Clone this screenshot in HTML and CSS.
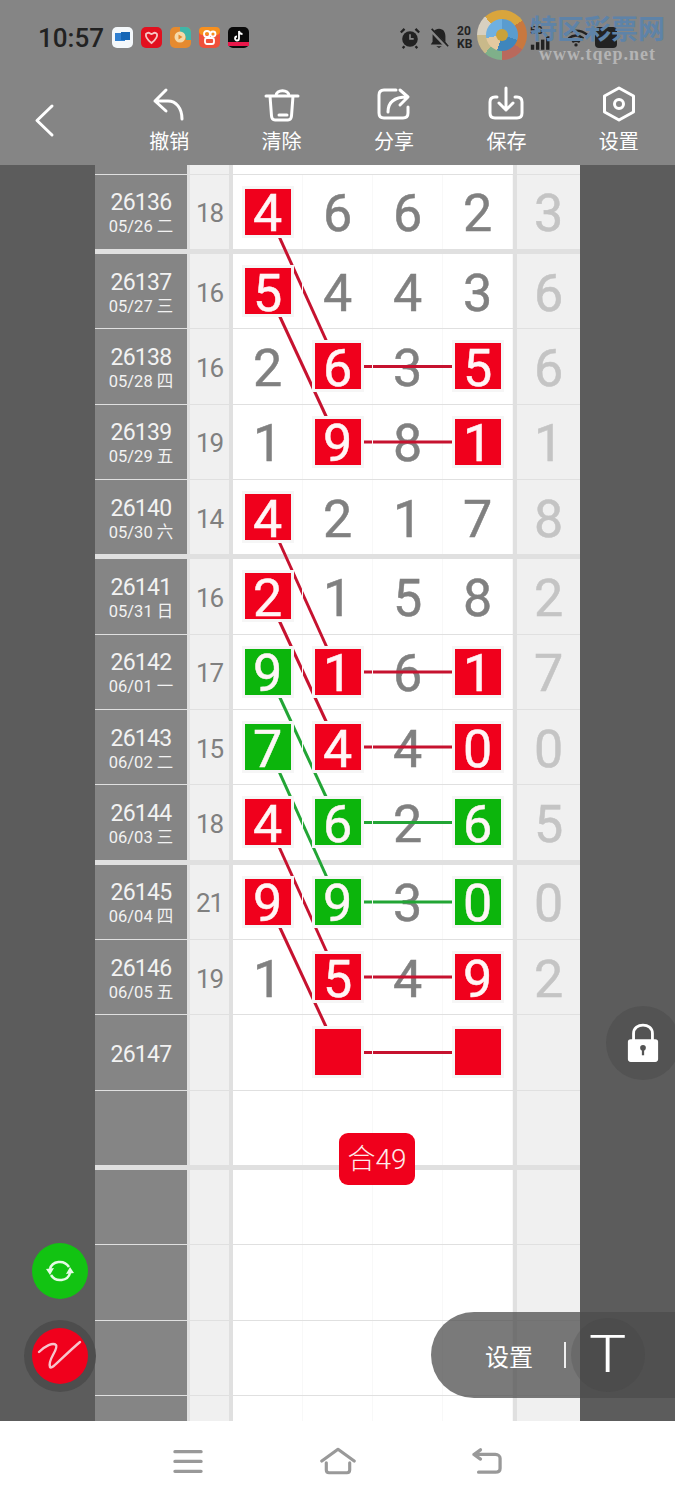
FILE: index.html
```html
<!DOCTYPE html>
<html lang="zh-CN">
<head>
  <meta charset="UTF-8" />
  <meta name="viewport" content="width=device-width, initial-scale=1.0"/>
  <title>排列五 走势图</title>
  <link rel="stylesheet" href="styles.css">
</head>
<body>

<div class="top">
  <div class="status">
    <span class="time">10:57</span>
    <div class="apps">
      <svg class="app" viewBox="0 0 21 21"><rect width="21" height="21" rx="5" fill="#f4f8fb"/><rect x="3" y="6" width="10" height="8" fill="#2f7fd0"/><rect x="9" y="5" width="9" height="8" fill="#1565b5"/></svg>
      <svg class="app" viewBox="0 0 21 21"><rect width="21" height="21" rx="5" fill="#e2101f"/><path d="M5 7c3-3 4 0 5.500 0s3-3 5.500 0c1 4-3 7-5.500 9C8 14 4 11 5 7z" fill="none" stroke="#f6c6c6" stroke-width="1.800"/></svg>
      <svg class="app" viewBox="0 0 21 21"><rect width="21" height="21" rx="5" fill="#e58a2e"/><path d="M10 0h6a5 5 0 0 1 5 5v8H16A8 8 0 0 0 10 5z" fill="#3fb6a8"/><circle cx="10" cy="10" r="5.500" fill="#f6d9a8"/><path d="M8.500 7.500l4 2.500-4 2.500z" fill="#e58a2e"/></svg>
      <svg class="app" viewBox="0 0 21 21"><rect width="21" height="21" rx="5" fill="#f0503a"/><rect width="21" height="8" rx="4" fill="#f7901e"/><circle cx="8" cy="7" r="3" fill="none" stroke="#fff" stroke-width="1.800"/><circle cx="14" cy="7" r="2.500" fill="none" stroke="#fff" stroke-width="1.800"/><rect x="6" y="11" width="9" height="6" rx="2" fill="none" stroke="#fff" stroke-width="1.800"/></svg>
      <svg class="app" viewBox="0 0 21 21"><rect width="21" height="21" rx="5" fill="#0a0a0a"/><rect y="15" width="21" height="4" fill="#e8174a"/><path d="M11 4v7.500a2 2 0 1 1-2-2M11 4c.3 2 1.500 3 3.500 3" fill="none" stroke="#fff" stroke-width="1.800"/></svg>
    </div>
    <div class="sys">
      <svg class="sys-icon" viewBox="0 0 24 24"><circle cx="12" cy="13" r="8.500" fill="#222"/><path d="M12 8v5h4" fill="none" stroke="#888" stroke-width="1.800"/><path d="M2 6l4-4M22 6l-4-4M6 21l-2 2M18 21l2 2" stroke="#222" stroke-width="2.500"/></svg>
      <svg class="sys-icon" viewBox="0 0 24 24"><path d="M12 2c-5 0-7 4-7 8v6l-2 3h18l-2-3v-6c0-4-2-8-7-8zM9 21h6l-3 2z" fill="#222"/><path d="M3 3l18 19" stroke="#888" stroke-width="4"/><path d="M4 2l18 19" stroke="#222" stroke-width="1.800"/></svg>
      <div class="speed"><span>20</span><span>KB</span></div>
      <div class="net">
        <span>5G</span>
        <svg viewBox="0 0 26 16"><rect x="1" y="10" width="4" height="6" fill="#222"/><rect x="7" y="7" width="4" height="9" fill="#222"/><rect x="13" y="4" width="4" height="12" fill="#222"/><rect x="19" y="0" width="4" height="16" fill="#222"/></svg>
      </div>
      <svg class="wifi" viewBox="0 0 28 20"><path d="M2 7c7-6 17-6 24 0M6 11c5-4 11-4 16 0M10 15c3-2 5-2 8 0" fill="none" stroke="#222" stroke-width="2.500"/><circle cx="14" cy="18" r="1.800" fill="#222"/></svg>
      <div class="battery"></div>
    </div>
    <div class="mark">
      <div class="mark-logo"><div class="mark-hole"><div class="mark-dot"></div></div></div>
      <div class="mark-text">
        <div class="mark-name">特区彩票网</div>
        <div class="mark-url">www.tqep.net</div>
      </div>
    </div>
  </div>

  <div class="toolbar">
    <svg class="back" viewBox="26 96 34 50"><path d="M52 106L37 120.500L52 135"/></svg>
    <div class="tool">
      <svg viewBox="149 86 40 36"><path d="M166 90L155 101L166 111M155 101H168C176 101 182 108 182 119"/></svg>
      <span>撤销</span>
    </div>
    <div class="tool">
      <svg viewBox="261 86 40 36"><path d="M265 96H297M275 96C275 89 288 89 288 96M269 96L270.500 116C270.700 118.500 272 120 274 120H287C289 120 290.300 118.500 290.500 116L292 96M278 115H286"/></svg>
      <span>清除</span>
    </div>
    <div class="tool">
      <svg viewBox="374 86 40 36"><path d="M396 90H384C380.500 90 379 92 379 95V113C379 116.500 380.500 118 384 118H403C406.500 118 408 116.500 408 113V107M388 112C388 102 394 97 407 97M400 90L408 97L400 105"/></svg>
      <span>分享</span>
    </div>
    <div class="tool">
      <svg viewBox="486 86 40 36"><path d="M497 97H495C491.500 97 490 99 490 102V113C490 116.500 491.500 118 495 118H517C520.500 118 522 116.500 522 113V102C522 99 520.500 97 517 97H515M506 88V110M499 103L506 110L513 103"/></svg>
      <span>保存</span>
    </div>
    <div class="tool">
      <svg viewBox="599 86 40 36"><path d="M619 88L633.500 96V112L619 120L604.500 112V96Z"/><circle cx="619" cy="104" r="4.500"/></svg>
      <span>设置</span>
    </div>
  </div>
</div>

<div class="main">
  <div class="sheet">
    <div class="row cut">
      <div class="date"></div><div class="sum"></div><div class="cells"></div><div class="tail"></div>
    </div>
    <div class="row end">
      <div class="date"><b>26136</b><span>05/26 二</span></div>
      <div class="sum">18</div>
      <div class="cells"><span class="num red">4</span><span class="num">6</span><span class="num">6</span><span class="num">2</span></div>
      <div class="tail">3</div>
    </div>

    <div class="row">
      <div class="date"><b>26137</b><span>05/27 三</span></div>
      <div class="sum">16</div>
      <div class="cells"><span class="num red">5</span><span class="num">4</span><span class="num">4</span><span class="num">3</span></div>
      <div class="tail">6</div>
    </div>
    <div class="row">
      <div class="date"><b>26138</b><span>05/28 四</span></div>
      <div class="sum">16</div>
      <div class="cells"><span class="num">2</span><span class="num red">6</span><span class="num">3</span><span class="num red">5</span></div>
      <div class="tail">6</div>
    </div>
    <div class="row">
      <div class="date"><b>26139</b><span>05/29 五</span></div>
      <div class="sum">19</div>
      <div class="cells"><span class="num">1</span><span class="num red">9</span><span class="num">8</span><span class="num red">1</span></div>
      <div class="tail">1</div>
    </div>
    <div class="row end">
      <div class="date"><b>26140</b><span>05/30 六</span></div>
      <div class="sum">14</div>
      <div class="cells"><span class="num red">4</span><span class="num">2</span><span class="num">1</span><span class="num">7</span></div>
      <div class="tail">8</div>
    </div>

    <div class="row">
      <div class="date"><b>26141</b><span>05/31 日</span></div>
      <div class="sum">16</div>
      <div class="cells"><span class="num red">2</span><span class="num">1</span><span class="num">5</span><span class="num">8</span></div>
      <div class="tail">2</div>
    </div>
    <div class="row">
      <div class="date"><b>26142</b><span>06/01 一</span></div>
      <div class="sum">17</div>
      <div class="cells"><span class="num green">9</span><span class="num red">1</span><span class="num">6</span><span class="num red">1</span></div>
      <div class="tail">7</div>
    </div>
    <div class="row">
      <div class="date"><b>26143</b><span>06/02 二</span></div>
      <div class="sum">15</div>
      <div class="cells"><span class="num green">7</span><span class="num red">4</span><span class="num">4</span><span class="num red">0</span></div>
      <div class="tail">0</div>
    </div>
    <div class="row end">
      <div class="date"><b>26144</b><span>06/03 三</span></div>
      <div class="sum">18</div>
      <div class="cells"><span class="num red">4</span><span class="num green">6</span><span class="num">2</span><span class="num green">6</span></div>
      <div class="tail">5</div>
    </div>

    <div class="row">
      <div class="date"><b>26145</b><span>06/04 四</span></div>
      <div class="sum">21</div>
      <div class="cells"><span class="num red">9</span><span class="num green">9</span><span class="num">3</span><span class="num green">0</span></div>
      <div class="tail">0</div>
    </div>
    <div class="row">
      <div class="date"><b>26146</b><span>06/05 五</span></div>
      <div class="sum">19</div>
      <div class="cells"><span class="num">1</span><span class="num red">5</span><span class="num">4</span><span class="num red">9</span></div>
      <div class="tail">2</div>
    </div>
    <div class="row">
      <div class="date"><b>26147</b></div>
      <div class="sum"></div>
      <div class="cells"><span class="num"></span><span class="num red"></span><span class="num"></span><span class="num red"></span></div>
      <div class="tail"></div>
    </div>
    <div class="row end">
      <div class="date"></div><div class="sum"></div>
      <div class="cells"><span class="num"></span><span class="num"></span><span class="num"></span><span class="num"></span></div>
      <div class="tail"></div>
    </div>

    <div class="row">
      <div class="date"></div><div class="sum"></div>
      <div class="cells"><span class="num"></span><span class="num"></span><span class="num"></span><span class="num"></span></div>
      <div class="tail"></div>
    </div>
    <div class="row">
      <div class="date"></div><div class="sum"></div>
      <div class="cells"><span class="num"></span><span class="num"></span><span class="num"></span><span class="num"></span></div>
      <div class="tail"></div>
    </div>
    <div class="row">
      <div class="date"></div><div class="sum"></div>
      <div class="cells"><span class="num"></span><span class="num"></span><span class="num"></span><span class="num"></span></div>
      <div class="tail"></div>
    </div>
    <div class="row">
      <div class="date"></div><div class="sum"></div>
      <div class="cells"><span class="num"></span><span class="num"></span><span class="num"></span><span class="num"></span></div>
      <div class="tail"></div>
    </div>

    <!-- connecting lines, sheet coordinates, boxes sit on top of them -->
    <svg class="lines" viewBox="0 0 485 1256">
      <g class="line-red">
        <path d="M173 47L243 201.500"/>
        <path d="M173 126L243 277"/>
        <path d="M243 201.500H383"/>
        <path d="M243 277H383"/>
        <path d="M173 352L243 507"/>
        <path d="M173 431.500L243 582"/>
        <path d="M243 507H383"/>
        <path d="M243 582H383"/>
        <path d="M173 657.500L243 812"/>
        <path d="M173 737L243 887.500"/>
        <path d="M243 812H383"/>
        <path d="M243 887.500H383"/>
      </g>
      <g class="line-green">
        <path d="M173 507L243 657.500"/>
        <path d="M173 582L243 737"/>
        <path d="M243 657.500H383"/>
        <path d="M243 737H383"/>
      </g>
    </svg>

    <div class="total">合49</div>
  </div>

  <div class="lock">
    <svg viewBox="0 0 36 42"><path d="M8 20V11C8 -1 28 -1 28 11V20" fill="none" stroke="#fff" stroke-width="3"/><rect x="2" y="17" width="32" height="24" rx="3" fill="#fff"/><circle cx="18" cy="26" r="3" fill="#535353"/><rect x="16.800" y="27" width="2.400" height="7" fill="#535353"/></svg>
  </div>

  <div class="round-btn refresh">
    <svg viewBox="0 0 32 32"><path d="M6 14C8 6 20 4 25 12M26 18C24 26 12 28 7 20" fill="none" stroke="#e6fbe6" stroke-width="2.500"/><path d="M2 14L10 13L6 20ZM30 18L22 19L26 12Z" fill="#e6fbe6"/></svg>
  </div>
  <div class="pen-halo">
    <div class="round-btn pen">
      <svg viewBox="0 0 56 56"><path d="M7 24C13 18 21 14 24 17C27 21 15 32 18 39C20 42 29 30 48 14" fill="none" stroke="#f7c4cc" stroke-width="2.400" stroke-linecap="round"/></svg>
    </div>
  </div>

  <div class="pill">
    <span class="pill-label">设置</span>
    <span class="pill-bar"></span>
    <div class="pill-round"><span>T</span></div>
  </div>
</div>

<div class="nav">
  <svg viewBox="0 0 34 30"><path d="M3 5H31M3 15.500H31M3 26H31"/></svg>
  <svg viewBox="0 0 40 30"><path d="M2 15L20 2L38 15M7 17V25C7 27 8 28 10 28H30C32 28 33 27 33 25V17"/></svg>
  <svg viewBox="0 0 34 30"><path d="M10 3L3 8L10 13M3 8H26C29 8 31 10 31 12V23C31 26 29 27 26 27H8"/></svg>
</div>

</body>
</html>
```

FILE: styles.css
```css
* {
  box-sizing: border-box;
}

body {
  margin: 0;
  width: 675px;
  height: 1500px;
  overflow: hidden;
  background: white;
  font-family: Roboto, "Noto Sans CJK SC", sans-serif;
}

/* top bar */
.top {
  height: 165px;
  background: #858585;
}

.status {
  position: relative;
  height: 75px;
  padding-left: 38px;
  display: flex;
  align-items: center;
}

.time {
  font-size: 26px;
  font-weight: 500;
  color: #222;
  width: 74px;
}

.apps {
  display: flex;
  gap: 8px;
}

.app {
  width: 21px;
  height: 21px;
}

.sys {
  display: flex;
  align-items: center;
  margin-left: 150px;
}

.sys-icon {
  width: 22px;
  height: 22px;
  margin-right: 7px;
}

.speed {
  display: flex;
  flex-direction: column;
  width: 73px;
  font-size: 12px;
  line-height: 13px;
  font-weight: 700;
  color: #222;
}

.net {
  width: 22px;
  margin-right: 11px;
  margin-top: 1px;
  display: flex;
  flex-direction: column;
  font-size: 10px;
  line-height: 10px;
  font-weight: 700;
  color: #222;
}

.net svg {
  width: 22px;
  height: 14px;
}

.wifi {
  width: 26px;
  height: 19px;
  margin-right: 6px;
}

.battery {
  width: 22px;
  height: 21px;
  border-radius: 4px;
  background: #222;
}

.mark {
  position: absolute;
  left: 477px;
  top: 10px;
  display: flex;
  gap: 3px;
}

.mark-logo {
  width: 50px;
  height: 50px;
  border-radius: 50%;
  background: conic-gradient(#d9a53c 0 15%, #c8783f 15% 35%, #b9695c 35% 50%, #7fb08a 50% 62%, #c9b98a 62% 75%, #d8d0c0 75% 88%, #d9a53c 88%);
  padding: 9px;
}

.mark-hole {
  width: 32px;
  height: 32px;
  border-radius: 50%;
  background: conic-gradient(#5a9ccf 0 30%, #3f86bc 30% 55%, #e3c9a0 55% 72%, #6fb0e0 72%);
  padding: 10px;
}

.mark-dot {
  width: 12px;
  height: 12px;
  border-radius: 50%;
  background: #c9a23a;
}

.mark-text {
  padding-top: 5px;
  text-align: center;
}

.mark-name {
  font-size: 27px;
  line-height: 30px;
  font-weight: 700;
  color: #5e83a8;
  white-space: nowrap;
}

.mark-url {
  font-family: "Liberation Serif", serif;
  font-size: 18px;
  line-height: 18px;
  font-weight: 700;
  letter-spacing: 1px;
  color: #b4b4b4;
  white-space: nowrap;
}

.toolbar {
  height: 90px;
  display: flex;
}

.toolbar svg {
  fill: none;
  stroke: white;
  stroke-width: 3;
  stroke-linecap: round;
  stroke-linejoin: round;
}

.back {
  width: 34px;
  height: 50px;
  margin: 21px 53px 0 26px;
  stroke-width: 3.5;
}

.tool {
  flex: 1;
  display: flex;
  flex-direction: column;
  align-items: center;
  padding-top: 11px;
}

.tool svg {
  width: 40px;
  height: 36px;
}

.tool span {
  margin-top: 6px;
  font-size: 20px;
  line-height: 28px;
  color: white;
}

/* sheet */
.main {
  position: relative;
  height: 1256px;
  overflow: hidden;
  background: #5c5c5c;
}

.sheet {
  position: relative;
  width: 485px;
  height: 1256px;
  margin-left: 95px;
  overflow: hidden;
  background: #e0e0e0;
}

.row {
  display: flex;
  height: 74.33px;
  margin-bottom: 1px;
}

.row.end {
  margin-bottom: 5px;
}

.row.cut {
  height: 8.67px;
}

.date {
  width: 92px;
  padding-top: 4px;
  background: #858585;
  color: #f2f2f2;
  display: flex;
  flex-direction: column;
  align-items: center;
  justify-content: center;
}

.date b {
  font-size: 23px;
  line-height: 27px;
  font-weight: 400;
  letter-spacing: -0.7px;
}

.date span {
  font-size: 16.5px;
  line-height: 22px;
}

.sum {
  width: 39px;
  margin-left: 3px;
  padding-top: 3px;
  background: #f0f0f0;
  color: #808080;
  font-size: 26px;
  letter-spacing: -1px;
  display: flex;
  align-items: center;
  justify-content: center;
}

.cells {
  width: 280px;
  margin-left: 4px;
  background: white;
  display: flex;
}

.num {
  width: 70px;
  padding-top: 4px;
  border-right: 1px solid #f8f8f8;
  color: #808080;
  font-size: 52px;
  -webkit-text-stroke: 0.5px;
  display: flex;
  align-items: center;
  justify-content: center;
}

/* a box makes its own stack: above the lines, its digit above the fill */
.num.red,
.num.green {
  position: relative;
  z-index: 3;
  color: #fff6f6;
}

.num.red::before,
.num.green::before {
  content: "";
  position: absolute;
  z-index: -1;
  left: 12px;
  top: 14px;
  width: 46px;
  height: 46px;
  box-shadow: 0 0 0 3px #f6f6f6;
}

.num.red::before {
  background: #f0001c;
}

.num.green::before {
  background: #0cb50c;
}

.tail {
  width: 63px;
  margin-left: 4px;
  padding-top: 4px;
  background: #f0f0f0;
  color: #c4c4c4;
  font-size: 52px;
  -webkit-text-stroke: 0.5px;
  display: flex;
  align-items: center;
  justify-content: center;
}

.lines {
  position: absolute;
  left: 0;
  top: 0;
  width: 485px;
  height: 1256px;
  z-index: 1;
  fill: none;
  stroke-width: 3;
}

.line-red {
  stroke: #c6122f;
}

.line-green {
  stroke: #22a535;
}

.total {
  position: absolute;
  z-index: 3;
  left: 244px;
  top: 968px;
  width: 76px;
  height: 52px;
  padding-bottom: 5px;
  border-radius: 9px;
  background: #f0001c;
  color: #fdeaea;
  font-size: 28px;
  font-weight: 300;
  display: flex;
  align-items: center;
  justify-content: center;
}

/* floating buttons */
.lock {
  position: absolute;
  left: 606px;
  top: 841px;
  width: 74px;
  height: 74px;
  border-radius: 50%;
  background: #535353;
  padding: 17px 0 0 20px;
}

.lock svg {
  display: block;
  width: 34px;
  height: 40px;
}

.round-btn {
  width: 56px;
  height: 56px;
  border-radius: 50%;
  display: flex;
  align-items: center;
  justify-content: center;
}

.refresh {
  position: absolute;
  left: 32px;
  top: 1078px;
  background: #12c312;
}

.refresh svg {
  width: 32px;
  height: 32px;
}

.pen-halo {
  position: absolute;
  left: 24px;
  top: 1155px;
  width: 72px;
  height: 72px;
  border-radius: 50%;
  background: #4d4d4d;
  padding: 8px;
}

.pen {
  background: #f0001c;
}

.pen svg {
  width: 56px;
  height: 56px;
}

.pill {
  position: absolute;
  left: 431px;
  top: 1147px;
  width: 244px;
  height: 86px;
  border-radius: 43px 0 0 43px;
  background: rgba(76, 76, 76, 0.74);
  display: flex;
  align-items: center;
  z-index: 4;
}

.pill-label {
  margin-left: 54px;
  font-size: 24px;
  color: white;
}

.pill-bar {
  width: 2px;
  height: 26px;
  margin-left: 31px;
  background: #eee;
}

.pill-round {
  width: 74px;
  height: 74px;
  margin-left: 5px;
  border-radius: 50%;
  background: rgba(60, 60, 60, 0.2);
  display: flex;
  align-items: center;
  justify-content: center;
}

.pill-round span {
  font-size: 52px;
  line-height: 52px;
  font-weight: 300;
  color: white;
  transform: scaleX(1.2);
}

/* bottom nav */
.nav {
  height: 79px;
  background: white;
  display: flex;
  align-items: center;
  padding: 0 172px;
  justify-content: space-between;
}

.nav svg {
  width: 32px;
  height: 28px;
  fill: none;
  stroke: #999;
  stroke-width: 3.5;
  stroke-linecap: round;
  stroke-linejoin: round;
}

.nav svg:nth-child(2) {
  width: 36px;
}
```
